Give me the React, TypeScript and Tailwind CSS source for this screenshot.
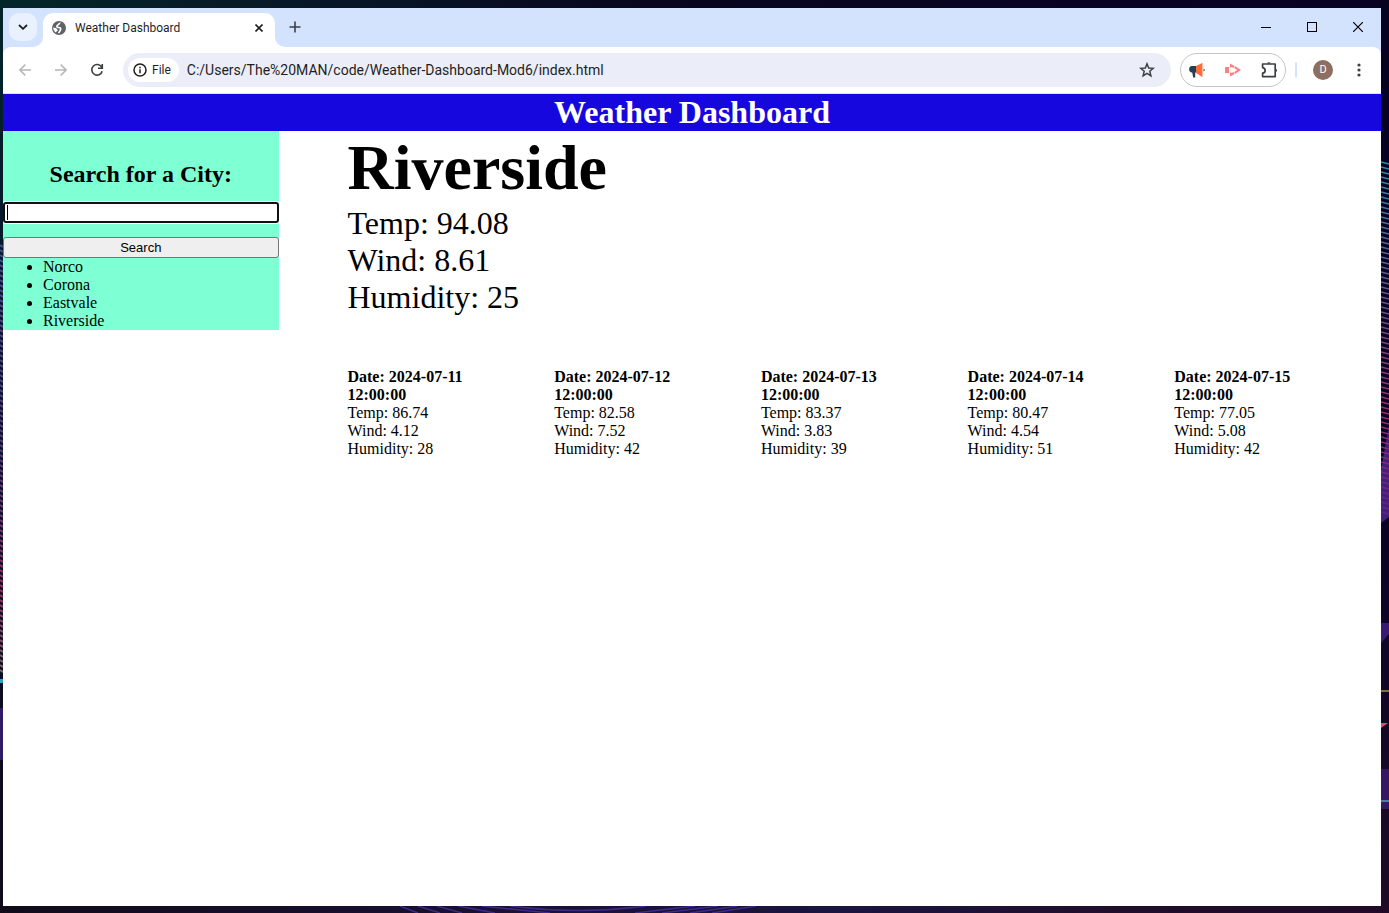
import { useState } from "react";
import type { FormEvent, ReactNode } from "react";

const cities = ["Norco", "Corona", "Eastvale", "Riverside"];

const forecast = [
  { date: "2024-07-11 12:00:00", temp: "86.74", wind: "4.12", humidity: "28" },
  { date: "2024-07-12 12:00:00", temp: "82.58", wind: "7.52", humidity: "42" },
  { date: "2024-07-13 12:00:00", temp: "83.37", wind: "3.83", humidity: "39" },
  { date: "2024-07-14 12:00:00", temp: "80.47", wind: "4.54", humidity: "51" },
  { date: "2024-07-15 12:00:00", temp: "77.05", wind: "5.08", humidity: "42" },
];

function IconButton({ label, children }: { label: string; children: ReactNode }) {
  return (
    <button type="button" aria-label={label} className="flex size-7 shrink-0 items-center justify-center rounded-full">
      {children}
    </button>
  );
}

/* Desktop wallpaper: repeated line patterns along the edges. */
function Wallpaper() {
  return (
    <div aria-hidden="true" className="absolute inset-0 overflow-hidden bg-linear-to-r from-[#03262a] via-[#08051f] to-[#0a0222]">
      <svg className="absolute top-0 right-0" width="8" height="913">
        <defs>
          <linearGradient id="rightBase" x1="0" y1="0" x2="0" y2="1">
            <stop offset="0" stopColor="#060220" />
            <stop offset="0.6" stopColor="#0b0326" />
            <stop offset="1" stopColor="#1d0c27" />
          </linearGradient>
          <linearGradient id="rightWave" gradientUnits="userSpaceOnUse" x1="0" y1="160" x2="0" y2="520">
            <stop offset="0" stopColor="#2f8fae" />
            <stop offset="0.3" stopColor="#5d5f92" />
            <stop offset="0.7" stopColor="#9c2f6a" />
            <stop offset="1" stopColor="#5a2390" />
          </linearGradient>
        </defs>
        <rect width="8" height="913" fill="url(#rightBase)" />
        <path d="M0 470 L8 425 V517 L0 523Z" fill="#43207a" />
        {Array.from({ length: 71 }, (_, i) => (
          <path key={i} d={`M0 ${162 + i * 5} L8 ${164 + i * 5}`} stroke="url(#rightWave)" strokeWidth="1.5" />
        ))}
        <path d="M0 623H8V634L0 643Z" fill="#3a1873" />
        <rect y="690" width="8" height="2" fill="#7d7038" />
        <path d="M0 723H7L0 728Z" fill="#e8476f" />
        <rect y="769" width="8" height="40" fill="#371761" />
        <rect y="800" width="8" height="2" fill="#4183a0" />
      </svg>
      <svg className="absolute top-0 left-0" width="3" height="913">
        <defs>
          <linearGradient id="leftBase" x1="0" y1="0" x2="0" y2="1">
            <stop offset="0" stopColor="#03262a" />
            <stop offset="0.4" stopColor="#071229" />
            <stop offset="1" stopColor="#110a1c" />
          </linearGradient>
          <linearGradient id="leftWave" gradientUnits="userSpaceOnUse" x1="0" y1="240" x2="0" y2="680">
            <stop offset="0" stopColor="#3f4f8f" />
            <stop offset="0.5" stopColor="#5b3a80" />
            <stop offset="0.8" stopColor="#9c2f5c" />
            <stop offset="1" stopColor="#7a6a68" />
          </linearGradient>
        </defs>
        <rect width="3" height="913" fill="url(#leftBase)" />
        {Array.from({ length: 86 }, (_, i) => (
          <path key={i} d={`M0 ${245 + i * 5} L3 ${247 + i * 5}`} stroke="url(#leftWave)" strokeWidth="2" />
        ))}
        <rect y="679" width="3" height="4" fill="#2ba5c4" />
        <rect y="708" width="3" height="52" fill="#301a66" />
      </svg>
      <svg className="absolute bottom-0 left-0 w-full" height="7" viewBox="0 0 1389 7" preserveAspectRatio="none">
        <defs>
          <linearGradient id="bottomBase">
            <stop offset="0" stopColor="#110b19" />
            <stop offset="0.4" stopColor="#1a1138" />
            <stop offset="0.6" stopColor="#191440" />
            <stop offset="0.8" stopColor="#200e2c" />
            <stop offset="1" stopColor="#200a28" />
          </linearGradient>
        </defs>
        <rect width="1389" height="7" fill="url(#bottomBase)" />
        <g fill="none" stroke="#40298a" strokeWidth="1.5">
          <path d="M400 0 418 7M418 0 440 7M437 0 462 7M458 0 495 7M482 0 550 7M510 0Q578 9 646 0M695 0 635 7M718 0 662 7M738 0 690 7M756 0 712 7" />
        </g>
      </svg>
    </div>
  );
}

function TabStrip() {
  return (
    <div className="flex h-[39px] items-end bg-[#d3e3fd] pl-[6px]">
      <button
        type="button"
        aria-label="Search tabs"
        className="mb-[6px] flex size-7 items-center justify-center rounded-[10px] bg-[#e9f1fe]"
      >
        <svg width="10" height="6" viewBox="0 0 10 6" fill="none" stroke="#1f1f1f" strokeWidth="1.8">
          <path d="M1 1 5 4.8 9 1" />
        </svg>
      </button>
      <div className="relative ml-[6px] flex h-[34px] w-[232px] items-center rounded-t-[10px] bg-white pr-2 pb-[5px] pl-2">
        <svg aria-hidden="true" className="absolute bottom-0 -left-[10px]" width="10" height="10">
          <path d="M10 0V10H0A10 10 0 0 0 10 0Z" fill="#fff" />
        </svg>
        <svg aria-hidden="true" className="absolute -right-[10px] bottom-0" width="10" height="10">
          <path d="M0 0V10H10A10 10 0 0 1 0 0Z" fill="#fff" />
        </svg>
        <svg aria-hidden="true" width="16" height="16" viewBox="0 0 16 16">
          <circle cx="8" cy="8" r="7" fill="#5f6368" />
          <path
            d="M8.6 2.6 C9.2 3.6 7.4 4.2 6.4 5.4 C5.4 6.6 6 7.6 7.6 7.5 C9.2 7.4 9.8 8.2 9.6 9.4 C9.4 10.8 8.4 11.6 7.6 13.2"
            fill="none"
            stroke="#fff"
            strokeWidth="1.7"
          />
          <path d="M2.2 7.6C3.6 7.4 6.4 8.4 6.6 10.2 6.6 11.4 5.4 11 4.8 12.4 3.2 11.4 2.1 9.6 2.2 7.6Z" fill="#fff" />
          <path d="M10.8 3.2 12.8 5 11 6.2 9.4 5.2Z" fill="#5f6368" />
        </svg>
        <span className="ml-2 flex-1 text-[12px]">Weather Dashboard</span>
        <button type="button" aria-label="Close tab" className="flex size-4 items-center justify-center">
          <svg width="8" height="8" viewBox="0 0 8 8" stroke="#1f1f1f" strokeWidth="1.6">
            <path d="M.5.5 7.5 7.5M7.5.5.5 7.5" />
          </svg>
        </button>
      </div>
      <button type="button" aria-label="New tab" className="mb-[6px] ml-[6px] flex size-7 items-center justify-center">
        <svg width="12" height="12" viewBox="0 0 12 12" stroke="#3c4043" strokeWidth="1.6">
          <path d="M6 .5V11.5M.5 6H11.5" />
        </svg>
      </button>
      <div className="ml-auto flex h-[38px] self-start">
        <button type="button" aria-label="Minimize" className="flex w-[46px] items-center justify-center">
          <svg width="10" height="10" viewBox="0 0 10 10" stroke="#000" shapeRendering="crispEdges">
            <path d="M0 5.5H10" />
          </svg>
        </button>
        <button type="button" aria-label="Maximize" className="flex w-[46px] items-center justify-center">
          <svg width="10" height="10" viewBox="0 0 10 10" fill="none" stroke="#000" shapeRendering="crispEdges">
            <path d="M.5.5H9.5V9.5H.5Z" />
          </svg>
        </button>
        <button type="button" aria-label="Close" className="flex w-[46px] items-center justify-center">
          <svg width="10" height="10" viewBox="0 0 10 10" stroke="#000" strokeWidth="1.2">
            <path d="M0 0 10 10M10 0 0 10" />
          </svg>
        </button>
      </div>
    </div>
  );
}

function Toolbar() {
  return (
    <div className="bg-[#d3e3fd]">
      <div className="flex h-[47px] items-center rounded-t-[8px] border-b border-[#dfe1e8] bg-white px-2">
        <div className="flex gap-2">
          <IconButton label="Back">
            <svg width="12" height="12" viewBox="0 0 12 12" fill="none" stroke="#b4b6ba" strokeWidth="1.5">
              <path d="M12 6H1M6.3.6.9 6 6.3 11.4" />
            </svg>
          </IconButton>
          <IconButton label="Forward">
            <svg width="12" height="12" viewBox="0 0 12 12" fill="none" stroke="#b4b6ba" strokeWidth="1.5">
              <path d="M0 6H11M5.7.6 11.1 6 5.7 11.4" />
            </svg>
          </IconButton>
          <IconButton label="Reload">
            <svg width="14" height="14" viewBox="0 0 14 14" fill="none" stroke="#3c4043" strokeWidth="1.6">
              <path d="M11.7 4.2A5.3 5.3 0 1 0 12.2 8.2M12.3.9V5.2H8" />
            </svg>
          </IconButton>
        </div>
        <div className="ml-3 flex h-[34px] flex-1 items-center rounded-full bg-[#ebeef8] pr-[10px] pl-[5px]">
          <button type="button" className="flex h-6 items-center gap-[5px] rounded-full bg-white pr-2 pl-[5px] text-[12px]">
            <svg aria-hidden="true" width="14" height="14" viewBox="0 0 14 14" fill="none" stroke="#1f1f1f" strokeWidth="1.5">
              <circle cx="7" cy="7" r="6" />
              <path d="M7 6.2V10.2M7 3.8V5.2" />
            </svg>
            File
          </button>
          <input
            type="text"
            aria-label="Address"
            defaultValue="C:/Users/The%20MAN/code/Weather-Dashboard-Mod6/index.html"
            className="ml-2 min-w-0 flex-1 bg-transparent text-[14px] text-[#1f1f1f] outline-none"
          />
          <IconButton label="Bookmark this tab">
            <svg width="16" height="16" viewBox="0 0 16 16" fill="none" stroke="#3c4043" strokeWidth="1.5">
              <path d="M8 1.8 9.7 6 14.3 6.3 10.8 9.3 11.9 13.8 8 11.4 4.1 13.8 5.2 9.3 1.7 6.3 6.3 6Z" />
            </svg>
          </IconButton>
        </div>
        <div className="ml-[9px] flex h-[34px] items-center gap-2 rounded-full border border-[#c4c7c5] px-[2px]">
          <IconButton label="Megaphone extension">
            <svg width="16" height="16" viewBox="0 0 16 16">
              <path d="M7 4H2.8C-.8 4-.6 10.6 2.8 10.6H3.2L4.2 15.6H6.2V10.6H7Z" fill="#213f57" />
              <path d="M7 4 13.2 1V15L7 11Z" fill="#ff6c37" />
              <path d="M13.7 1V15" stroke="#f7b79d" />
              <path d="M14.6 6.4Q17 8 14.6 9.6Z" fill="#213f57" />
            </svg>
          </IconButton>
          <IconButton label="Recorder extension">
            <svg width="16" height="14" viewBox="0 0 16 14" fill="#ff7f7f">
              <path d="M0 4H4V10H0Z" />
              <path
                d="M5 .5 9.6 3 8.6 4.9 6.6 3.9V4.6H5ZM5 13.5 9.6 11 8.6 9.1 6.6 10.1V9.4H5ZM10.2 3.3 16 7 10.2 10.7 9.2 8.9 12.2 7 9.2 5.1Z"
              />
            </svg>
          </IconButton>
          <IconButton label="Extensions">
            <svg width="18" height="18" viewBox="0 0 18 18" fill="none" stroke="#3c4043" strokeWidth="1.7">
              <path d="M2.6 3H15.2V15.6H2.6V12.2C6 11.7 6 7.2 2.6 6.6Z" strokeLinejoin="round" />
              <path d="M7 2.6A2 2 0 0 1 10.8 2.6ZM15.6 7.4A2 2 0 0 1 15.6 11.2Z" fill="#3c4043" stroke="none" />
            </svg>
          </IconButton>
        </div>
        <div className="ml-[9px] h-4 w-[2px] rounded-full bg-[#d3e3fd]" />
        <div className="ml-3 flex gap-2">
          <IconButton label="Profile">
            <span className="flex size-5 items-center justify-center rounded-full bg-[#8d6e63] text-[11px] text-white">
              D
            </span>
          </IconButton>
          <IconButton label="Menu">
            <svg width="4" height="14" viewBox="0 0 4 14" fill="#3c4043">
              <circle cx="2" cy="2" r="1.6" />
              <circle cx="2" cy="7" r="1.6" />
              <circle cx="2" cy="12" r="1.6" />
            </svg>
          </IconButton>
        </div>
      </div>
    </div>
  );
}

function SearchPanel() {
  const [city, setCity] = useState("");
  const submit = (event: FormEvent) => event.preventDefault();

  return (
    <aside className="w-1/5 bg-[#7fffd4] pt-[30px]">
      <form onSubmit={submit} className="flex flex-col gap-[14px]">
        <label htmlFor="city" className="text-center text-2xl leading-[27px] font-bold">
          Search for a City:
        </label>
        <div className="relative flex">
          <input
            id="city"
            type="text"
            value={city}
            onChange={(event) => setCity(event.target.value)}
            className="peer h-[21px] w-full rounded-[3px] border-2 border-[#101010] bg-white px-[2px] font-['Liberation_Sans',sans-serif] text-[13px] shadow-[0_0_0_1px_white] outline-none"
          />
          <span aria-hidden="true" className="absolute top-[3px] left-1 h-[15px] w-px bg-black peer-focus:hidden" />
        </div>
        <button
          type="submit"
          className="h-[21px] rounded-[3px] border border-[#767676] bg-[#efefef] font-['Liberation_Sans',sans-serif] text-[13px] leading-[15px]"
        >
          Search
        </button>
      </form>
      <ul className="list-disc pl-10">
        {cities.map((name) => (
          <li key={name}>{name}</li>
        ))}
      </ul>
    </aside>
  );
}

export default function App() {
  return (
    <div className="relative flex min-h-screen flex-col pt-2 pr-2 pb-[7px] pl-[3px]">
      <Wallpaper />
      <div className="relative flex flex-1 flex-col overflow-hidden bg-white">
        <div className="font-[Roboto,sans-serif] text-[#1f1f1f]">
          <TabStrip />
          <Toolbar />
        </div>
        <div className="font-['Liberation_Serif',serif] text-[16px] leading-[18px] text-black">
          <header className="bg-[#1607de] text-center text-white">
            <h1 className="text-[32px] leading-[37px] font-bold">Weather Dashboard</h1>
          </header>
          <div className="flex items-start">
            <SearchPanel />
            <main className="ml-[5%] w-3/4">
              <section className="text-[32px] leading-[37px]">
                <h2 className="text-[64px] leading-[74px] font-bold">Riverside</h2>
                <p>Temp: 94.08</p>
                <p>Wind: 8.61</p>
                <p>Humidity: 25</p>
              </section>
              <section className="mt-[52px] grid grid-cols-5">
                {forecast.map((day) => (
                  <article key={day.date} className="pr-16">
                    <h3 className="font-bold">{`Date: ${day.date}`}</h3>
                    <p>{`Temp: ${day.temp}`}</p>
                    <p>{`Wind: ${day.wind}`}</p>
                    <p>{`Humidity: ${day.humidity}`}</p>
                  </article>
                ))}
              </section>
            </main>
          </div>
        </div>
      </div>
    </div>
  );
}
